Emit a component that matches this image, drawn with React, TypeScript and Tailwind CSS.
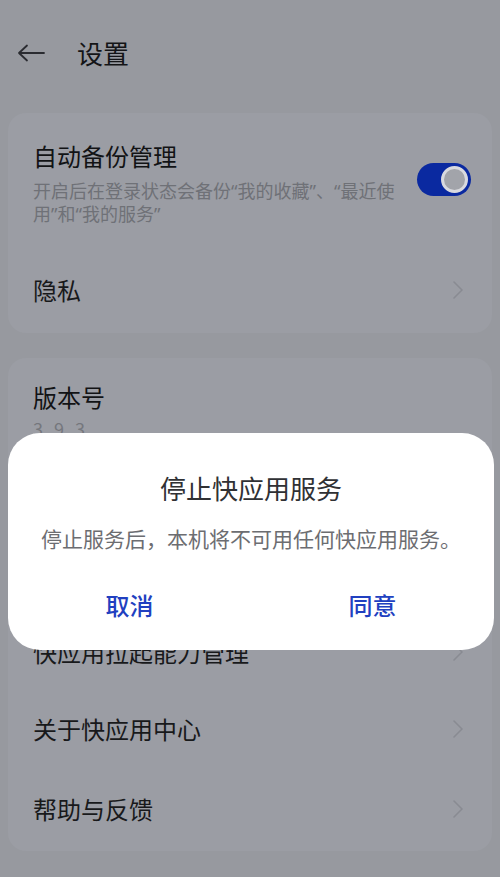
import { ReactNode } from 'react';

const font = { fontFamily: '"Noto Sans CJK SC", "Noto Sans", sans-serif' };
const latin = { fontFamily: '"Noto Sans", sans-serif' };

function Q({ children }: { children: ReactNode }) {
	return <span style={latin}>{children}</span>;
}

function Chevron() {
	return (
		<svg width="12" height="20" viewBox="0 0 12 20" fill="none" className="shrink-0">
			<path d="M2 2 L10 10 L2 18" stroke="#898b92" strokeWidth="1.6" strokeLinecap="round" strokeLinejoin="round" />
		</svg>
	);
}

function Row({ children, className = 'h-[78px]' }: { children: ReactNode; className?: string }) {
	return (
		<div className={`${className} flex items-center justify-between pl-[25px] pr-[28px]`}>
			<span className="text-[24px] leading-[30px] text-[#18191b]">{children}</span>
			<Chevron />
		</div>
	);
}

export default function App() {
	return (
		<div style={font} className="relative w-[500px] h-[877px] overflow-hidden bg-[#97999f]">
			{/* header */}
			<div className="h-[106px] flex items-center pl-[17px] pb-[1px]">
				<svg width="28" height="20" viewBox="0 0 28 20" fill="none">
					<path d="M2 10 H27 M10 2.5 L2 10 L10 17.5" stroke="#2a2b30" strokeWidth="1.8" strokeLinecap="round" strokeLinejoin="round" />
				</svg>
				<span className="ml-[32px] text-[26px] leading-[32px] text-[#141517]">设置</span>
			</div>

			{/* card 1 */}
			<div className="mx-2 mt-[7px] rounded-[18px] bg-[#9b9da4]">
				<div className="flex items-start justify-between pl-[25px] pr-[21px] pt-[28px] pb-[26px]">
					<div>
						<div className="text-[24px] leading-[30px] text-[#121315]">自动备份管理</div>
						<div className="mt-[8px] text-[18px] leading-[22px] text-[#6f7177]">
							开启后在登录状态会备份<Q>“</Q>我的收藏<Q>”</Q>、<Q>“</Q>最近使
							<br />
							用<Q>”</Q>和<Q>“</Q>我的服务<Q>”</Q>
						</div>
					</div>
					<div className="mt-[22px] w-[54px] h-[33px] rounded-full bg-[#0a29a0] flex items-center justify-end pr-[3px]">
						<div className="size-[27px] rounded-full bg-[#a2a4aa] border-[3px] border-[#d9dadf]" />
					</div>
				</div>
				<Row>隐私</Row>
				<div className="h-[4px]" />
			</div>

			{/* card 2 */}
			<div className="mx-2 mt-[25px] rounded-[18px] bg-[#9b9da4]">
				<div className="pl-[25px] pt-[24px] pb-[20px]">
					<div className="text-[24px] leading-[30px] text-[#121315]">版本号</div>
					<div className="mt-[5px] text-[18px] leading-[22px] tracking-[3px] text-[#75777d]">3.9.3</div>
				</div>
				<Row>检查更新</Row>
				<Row className="h-[77px]">停止快应用服务</Row>
				<Row className="h-[76px]">快应用拉起能力管理</Row>
				<Row className="h-[78px]">关于快应用中心</Row>
				<Row className="h-[82px]">帮助与反馈</Row>
				<div className="h-[1px]" />
			</div>

			{/* dialog */}
			<div className="absolute left-2 right-[6px] top-[433px] rounded-[32px] bg-white pt-[39px] pb-[31px]">
				<div className="text-center text-[26px] leading-[32px] text-[#303134]">停止快应用服务</div>
				<div className="mt-[21px] text-center text-[21px] leading-[26px] text-[#6c6d71]">
					停止服务后，本机将不可用任何快应用服务。
				</div>
				<div className="mt-[40px] flex">
					<button className="flex-1 text-[24px] leading-[28px] font-medium text-[#2140c0]">取消</button>
					<button className="flex-1 text-[24px] leading-[28px] font-medium text-[#2140c0]">同意</button>
				</div>
			</div>
		</div>
	);
}
